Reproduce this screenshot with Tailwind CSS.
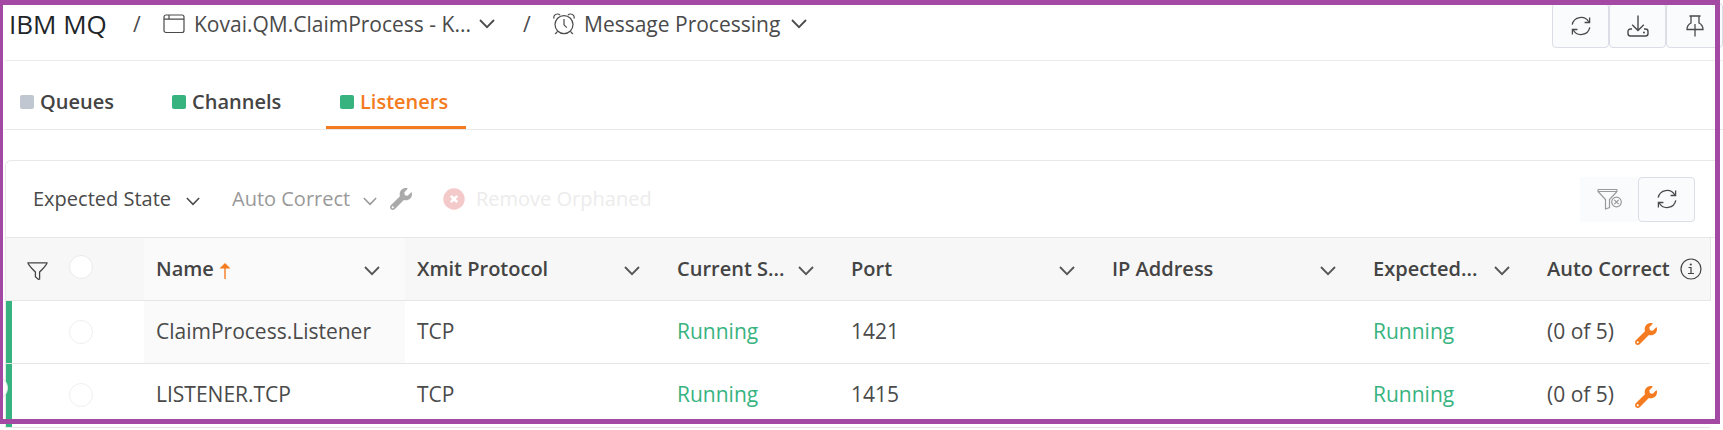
<!DOCTYPE html>
<html lang="en">
<head>
    <meta charset="UTF-8">
    <meta name="viewport" content="width=device-width, initial-scale=1.0">
    <title>IBM MQ - Listeners</title>
    <script src="https://cdn.jsdelivr.net/npm/@tailwindcss/browser@4"></script>
</head>
<body class="bg-white font-['Open_Sans',sans-serif] text-[21px] leading-7 text-[#4a4a4a] overflow-hidden">
    <!-- Icon sprite -->
    <svg class="hidden">
        <symbol id="chevron" viewBox="0 0 16 10"><path d="M1 1l7 7.2L15 1" fill="none" stroke="currentColor" stroke-width="1.8"/></symbol>
        <symbol id="wrench" viewBox="0 0 512 512"><path fill="currentColor" d="M507.73 109.1c-2.24-9.03-13.54-12.09-20.12-5.51l-74.36 74.36-67.88-11.31-11.31-67.88 74.36-74.36c6.62-6.62 3.43-17.9-5.66-20.16-47.38-11.74-99.55.91-136.58 37.93-39.64 39.64-50.55 97.1-34.05 147.2L18.74 402.76c-24.99 24.99-24.99 65.51 0 90.5 24.99 24.99 65.51 24.99 90.5 0l213.21-213.21c50.12 16.71 107.47 5.68 147.37-34.22 37.07-37.07 49.7-89.32 37.91-136.73zM64 472c-13.25 0-24-10.75-24-24 0-13.26 10.75-24 24-24s24 10.75 24 24c0 13.25-10.75 24-24 24z"/></symbol>
        <symbol id="refresh" viewBox="0 0 20 20"><g fill="none" stroke="currentColor" stroke-width="1.3"><path d="M1.2 8.6A9 9 0 0 1 17.8 6M18.8 11.4A9 9 0 0 1 2.2 14"/><path d="M18.6 1.6v4.9h-5M1.4 18.4v-4.9h5"/></g></symbol>
    </svg>

    <div class="relative">
        <!-- Breadcrumb bar -->
        <header class="flex items-start justify-between h-[61px] border-b border-[#ebebeb] ml-[5px] pt-[3px]">
            <nav class="flex items-center h-[42px] pl-[4px]">
                <h1 class="text-[26px] text-[#212529] w-[102px] whitespace-nowrap">IBM MQ</h1>
                <span class="ml-[22px] w-[30px]">/</span>
                <button class="flex items-center whitespace-nowrap">
                    <svg class="w-[22px] h-5 mr-[9px]" viewBox="0 0 22 20"><g fill="none" stroke="currentColor" stroke-width="1.2"><rect x="1" y="1" width="20" height="17.5" rx="2"/><path d="M1 5.2h20M6 1v4.2"/></g></svg>
                    <span class="w-[278px] text-left">Kovai.QM.ClaimProcess - K...</span>
                    <svg class="w-4 h-[10px] ml-[7px]"><use href="#chevron"/></svg>
                </button>
                <span class="ml-[28px] w-[30px]">/</span>
                <button class="flex items-center whitespace-nowrap">
                    <svg class="w-[22px] h-[22px] mr-[9px]" viewBox="0 0 22 22"><g fill="none" stroke="currentColor" stroke-width="1.2"><circle cx="11" cy="11.6" r="9"/><path d="M11 6v5.8l2.8 2.8M1 5.6C.2 3.4 2 1 4.4 1c1.2 0 2 .4 2.6 1.2M21 5.6C21.8 3.4 20 1 17.6 1c-1.2 0-2 .4-2.6 1.2M4.6 18.4l-2.4 2.6M17.4 18.4l2.4 2.6"/></g></svg>
                    <span class="w-[199px] text-left">Message Processing</span>
                    <svg class="w-4 h-[10px] ml-[8px]"><use href="#chevron"/></svg>
                </button>
            </nav>
            <div class="flex">
                <button aria-label="Refresh" class="flex items-center justify-center w-[57px] h-[45px] bg-[#fafbfd] border border-[#dcdde6] rounded-sm">
                    <svg class="w-5 h-5"><use href="#refresh"/></svg>
                </button>
                <button aria-label="Download" class="flex items-center justify-center w-[57px] h-[45px] bg-[#fafbfd] border border-[#dcdde6] rounded-sm">
                    <svg class="w-[22px] h-[22px]" viewBox="0 0 22 22"><g fill="none" stroke="currentColor" stroke-width="1.4"><path d="M11 .5v15M5.2 9.8l5.8 5.7 5.8-5.7M5 14H3.5C2 14 1 15 1 16.5v2C1 20 2 21 3.5 21h15c1.5 0 2.5-1 2.5-2.5v-2c0-1.5-1-2.5-2.5-2.5H17"/></g><circle cx="17" cy="17.5" r="1" fill="currentColor"/></svg>
                </button>
                <button aria-label="Pin" class="flex items-center justify-center w-[57px] h-[45px] bg-[#fafbfd] border border-[#dcdde6] rounded-sm">
                    <svg class="w-[18px] h-[22px]" viewBox="0 0 18 22"><path d="M3.5 1h11M5 1v7c-2.4 1.2-4 3.4-4 6.5h16c0-3.1-1.6-5.3-4-6.5V1M9 9v12.5" fill="none" stroke="currentColor" stroke-width="1.3"/></svg>
                </button>
            </div>
        </header>

        <!-- Tabs -->
        <nav class="flex items-end gap-7 h-[69px] ml-[5px] border-b border-[#e8e8e8] text-[20px] font-semibold text-[#444]">
            <a href="#" class="flex items-center gap-[6px] w-[125px] h-[55px] pl-[15px]"><span class="w-[14px] h-[14px] rounded-xs bg-[#c1c7d1]"></span>Queues</a>
            <a href="#" class="flex items-center gap-[6px] w-[140px] h-[55px] pl-[14px]"><span class="w-[14px] h-[14px] rounded-xs bg-[#37b380]"></span>Channels</a>
            <a href="#" class="flex items-center gap-[6px] w-[140px] h-[55px] pl-[14px] pt-[3px] border-b-3 border-[#f47b20] text-[#f47b20]"><span class="w-[14px] h-[14px] rounded-xs bg-[#37b380]"></span>Listeners</a>
        </nav>

        <section class="mt-[30px] ml-[5px] mr-[8px] border-t border-l border-[#e8e8e8] rounded-tl-md">
            <!-- Toolbar -->
            <div class="flex items-center justify-between h-[76px] pl-[27px] pr-[20px]">
                <div class="flex items-center whitespace-nowrap text-[20px]">
                    <button class="flex items-center"><span class="w-[143px] text-left">Expected State</span><svg class="w-[14px] h-[9px] ml-[10px] mt-1"><use href="#chevron"/></svg></button>
                    <button class="flex items-center ml-[32px] text-[#999]" disabled>
                        <span class="w-[121px] text-left">Auto Correct</span><svg class="w-[14px] h-[9px] ml-[10px] mt-1"><use href="#chevron"/></svg>
                        <svg class="w-[22px] h-[22px] ml-[13px] text-[#aaa]"><use href="#wrench"/></svg>
                    </button>
                    <button class="flex items-center ml-[31px] text-[#ececec]" disabled>
                        <svg class="w-[22px] h-[22px] mr-[11px]" viewBox="0 0 22 22"><circle cx="11" cy="11" r="10.7" fill="#f4c9c9"/><path d="M7.8 7.8l6.4 6.4M14.2 7.8l-6.4 6.4" stroke="#fff" stroke-width="2.6"/></svg>
                        Remove Orphaned
                    </button>
                </div>
                <div class="flex">
                    <button aria-label="Clear filter" class="flex items-center justify-center w-[58px] h-[45px] bg-[#fafbfd] text-[#999]" disabled>
                        <svg class="w-[25px] h-[22px]" viewBox="0 0 25 22"><g fill="none" stroke="currentColor" stroke-width="1.2"><path d="M1 1.5h19M1 1.5v2l7.5 8v9.5l4-1.5v-8l7.5-8v-2M1 3.5h19"/><circle cx="19.5" cy="14" r="4.8"/><path d="M17.3 11.8l4.4 4.4M21.7 11.8l-4.4 4.4"/></g></svg>
                    </button>
                    <button aria-label="Refresh list" class="flex items-center justify-center w-[57px] h-[45px] bg-[#fafbfd] border border-[#dcdde6] rounded-sm">
                        <svg class="w-5 h-5"><use href="#refresh"/></svg>
                    </button>
                </div>
            </div>

            <!-- Listeners table -->
            <div class="border-t border-[#e6e6e6] pr-[5px]">
                <table class="table-fixed w-full text-left">
                    <colgroup>
                        <col class="w-[138px]"><col class="w-[261px]"><col class="w-[260px]"><col class="w-[174px]"><col class="w-[261px]"><col class="w-[261px]"><col class="w-[174px]"><col class="w-[175px]">
                    </colgroup>
                    <thead class="bg-[#f7f7f7] text-[20px] text-[#444]">
                        <tr class="h-[62px] border-b border-[#e6e6e6]">
                            <th class="p-0">
                                <div class="flex items-center pl-[21px]">
                                    <button aria-label="Filter" class="mt-1"><svg class="w-[21px] h-[18px]" viewBox="0 0 21 18"><path d="M1 .8h19c0 2-1 2.7-7.4 9.2v7l-1.2.4-3-2.6V10C2 3.5 1 2.8 1 .8z" fill="none" stroke="currentColor" stroke-width="1.3"/></svg></button>
                                    <input type="checkbox" aria-label="Select all" class="appearance-none w-6 h-6 ml-[21px] mb-1 rounded-full border border-[#eaeaea] bg-white">
                                </div>
                            </th>
                            <th class="p-0 bg-[#fafafa] font-semibold">
                                <div class="flex items-center pl-3 pr-[25px]">Name
                                    <svg class="w-3 h-4 ml-[5px] mt-[5px] text-[#f47b20]" viewBox="0 0 12 16"><path d="M6 0l5.5 5.5H.5z" fill="currentColor"/><path d="M6 4v12" stroke="currentColor" stroke-width="1.4"/></svg>
                                    <svg class="w-4 h-[10px] ml-auto mt-1 text-[#555]"><use href="#chevron"/></svg>
                                </div>
                            </th>
                            <th class="p-0 font-semibold"><div class="flex items-center justify-between pl-3 pr-[25px]">Xmit Protocol<svg class="w-4 h-[10px] mt-1 text-[#555]"><use href="#chevron"/></svg></div></th>
                            <th class="p-0 font-semibold"><div class="flex items-center justify-between pl-3 pr-[25px] whitespace-nowrap">Current S...<svg class="w-4 h-[10px] mt-1 text-[#555]"><use href="#chevron"/></svg></div></th>
                            <th class="p-0 font-semibold"><div class="flex items-center justify-between pl-3 pr-[25px]">Port<svg class="w-4 h-[10px] mt-1 text-[#555]"><use href="#chevron"/></svg></div></th>
                            <th class="p-0 font-semibold"><div class="flex items-center justify-between pl-3 pr-[25px]">IP Address<svg class="w-4 h-[10px] mt-1 text-[#555]"><use href="#chevron"/></svg></div></th>
                            <th class="p-0 font-semibold"><div class="flex items-center justify-between pl-3 pr-[25px] whitespace-nowrap">Expected...<svg class="w-4 h-[10px] mt-1 text-[#555]"><use href="#chevron"/></svg></div></th>
                            <th class="p-0 font-semibold border-r border-[#e6e6e6]">
                                <div class="flex items-center justify-between pl-3 pr-2 whitespace-nowrap">Auto Correct
                                    <svg class="w-[22px] h-[22px] shrink-0" viewBox="0 0 22 22"><g fill="none" stroke="currentColor" stroke-width="1.2"><circle cx="11" cy="11" r="10"/><path d="M8.5 9.5H11v6M8 15.5h6"/></g><circle cx="10.8" cy="6.5" r="1.1" fill="currentColor"/></svg>
                                </div>
                            </th>
                        </tr>
                    </thead>
                    <tbody>
                        <tr class="h-[63px] border-b border-[#e6e6e6]">
                            <td class="p-0 shadow-[inset_6px_0_0_#37b380]"><input type="checkbox" aria-label="Select ClaimProcess.Listener" class="block appearance-none w-6 h-6 ml-[63px] rounded-full border border-[#efefef] bg-white"></td>
                            <td class="p-0 pl-3 pb-[2px] bg-[#fafafa]">ClaimProcess.Listener</td>
                            <td class="p-0 pl-3 pb-[2px]">TCP</td>
                            <td class="p-0 pl-3 pb-[2px] text-[#37b380]">Running</td>
                            <td class="p-0 pl-3 pb-[2px]">1421</td>
                            <td class="p-0 pl-3 pb-[2px]"></td>
                            <td class="p-0 pl-3 pb-[2px] text-[#37b380]">Running</td>
                            <td class="p-0 pl-3 pb-[2px]"><div class="flex items-center"><span class="w-[88px]">(0 of 5)</span><svg class="w-[22px] h-[22px] mt-[6px] text-[#f47b20]"><use href="#wrench"/></svg></div></td>
                        </tr>
                        <tr class="h-[64px] border-b border-[#e6e6e6]">
                            <td class="p-0 shadow-[inset_6px_0_0_#37b380]"><input type="checkbox" aria-label="Select LISTENER.TCP" class="block appearance-none w-6 h-6 ml-[63px] rounded-full border border-[#efefef] bg-white"></td>
                            <td class="p-0 pl-3 pb-[2px]">LISTENER.TCP</td>
                            <td class="p-0 pl-3 pb-[2px]">TCP</td>
                            <td class="p-0 pl-3 pb-[2px] text-[#37b380]">Running</td>
                            <td class="p-0 pl-3 pb-[2px]">1415</td>
                            <td class="p-0 pl-3 pb-[2px]"></td>
                            <td class="p-0 pl-3 pb-[2px] text-[#37b380]">Running</td>
                            <td class="p-0 pl-3 pb-[2px]"><div class="flex items-center"><span class="w-[88px]">(0 of 5)</span><svg class="w-[22px] h-[22px] mt-[6px] text-[#f47b20]"><use href="#wrench"/></svg></div></td>
                        </tr>
                    </tbody>
                </table>
            </div>
        </section>

        <!-- Side panel handle and highlight frame -->
        <span class="absolute -left-4 bottom-7 w-6 h-6 rounded-full bg-white border border-[#e6e6e6]"></span>
        <div class="absolute top-0 left-0 right-[3px] bottom-1 border-5 border-l-3 border-[#a349a4] pointer-events-none"></div>
    </div>
</body>
</html>
